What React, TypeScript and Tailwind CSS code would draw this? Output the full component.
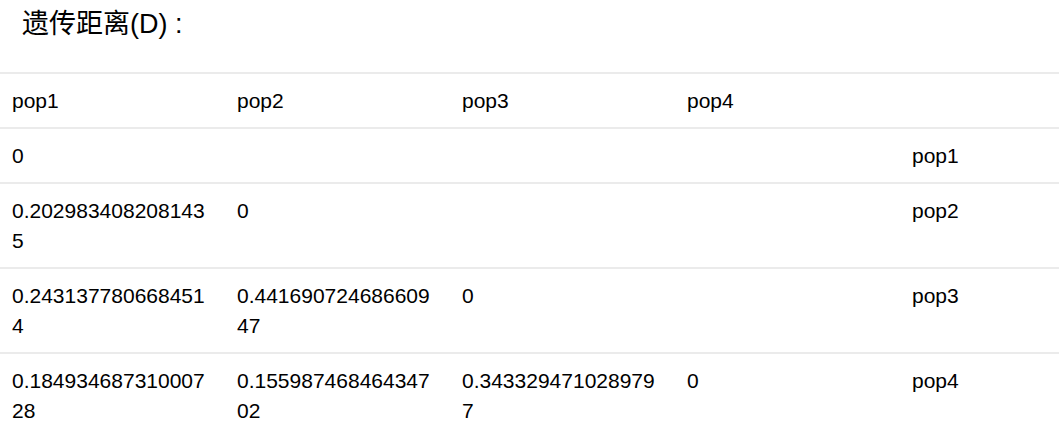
import React from "react";

const header = ["pop1", "pop2", "pop3", "pop4", ""];

const rows: string[][] = [
  ["0", "", "", "", "pop1"],
  ["0.2029834082081435", "0", "", "", "pop2"],
  ["0.2431377806684514", "0.44169072468660947", "0", "", "pop3"],
  ["0.18493468731000728", "0.15598746846434702", "0.3433294710289797", "0", "pop4"],
];

export default function App() {
  return (
    <div
      className="w-[1059px] h-[438px] overflow-hidden bg-white text-black"
      style={{ fontFamily: '"Liberation Sans", Arial, "Noto Sans CJK SC", sans-serif' }}
    >
      <div className="h-[72px] pl-[22px] pt-[5px]">
        <h2 className="text-[27px] leading-[39px] font-normal">遗传距离(D) :</h2>
      </div>
      <table className="w-[1125px] table-fixed border-collapse text-[21px] leading-[30px]">
        <thead>
          <tr className="border-t-2 border-[#ebebeb]">
            {header.map((h, i) => (
              <th key={i} className="w-[225px] px-3 pt-3 pb-[11px] text-left font-normal align-top">
                {h}
              </th>
            ))}
          </tr>
        </thead>
        <tbody>
          {rows.map((row, r) => (
            <tr key={r} className="border-t-2 border-[#ebebeb]">
              {row.map((cell, c) => (
                <td key={c} className="px-3 pt-3 pb-[11px] align-top break-all">
                  {cell}
                </td>
              ))}
            </tr>
          ))}
        </tbody>
      </table>
    </div>
  );
}
